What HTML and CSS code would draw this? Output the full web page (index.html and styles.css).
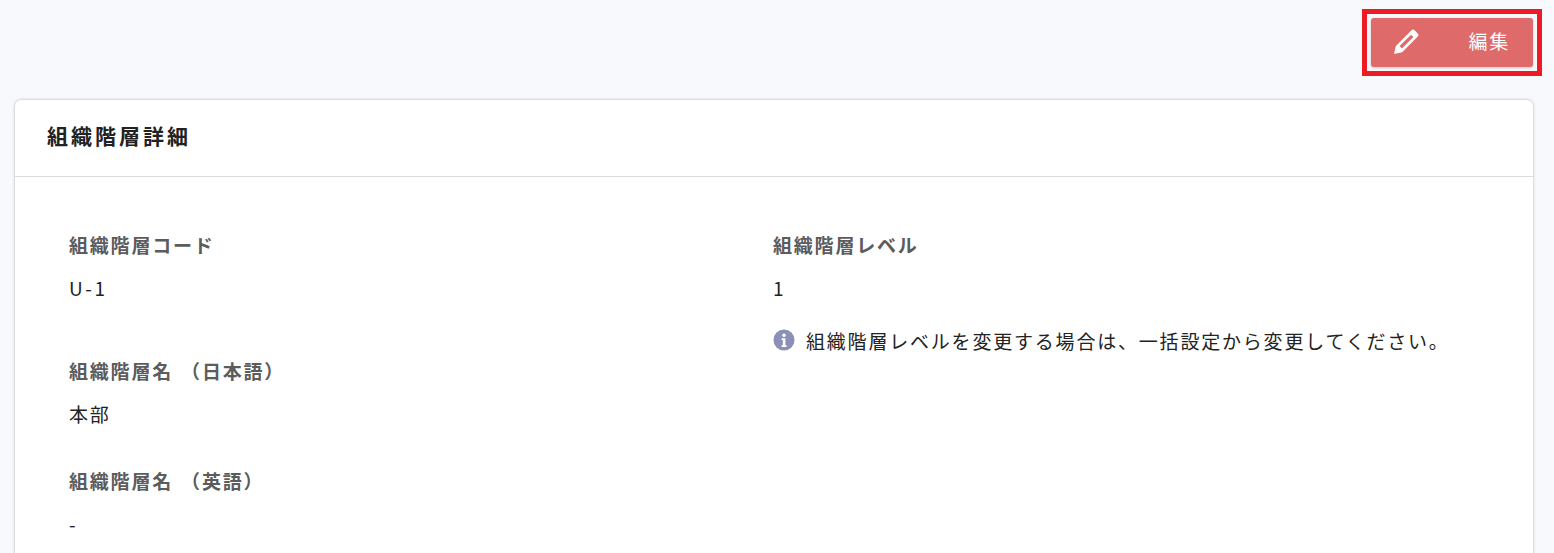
FILE: index.html
```html
<!DOCTYPE html>
<html lang="ja">
<head>
    <meta charset="UTF-8">
    <title>組織階層詳細</title>
    <link rel="stylesheet" href="styles.css">
</head>
<body>
    <div class="toolbar">
        <div class="highlight">
            <button class="edit-btn" type="button">
                <svg class="edit-icon" viewBox="0 0 24 24" aria-hidden="true">
                    <path d="M0 24L1.8 16.2 16.6 1.4a2.4 2.4 0 0 1 3.4 0l2.6 2.6a2.4 2.4 0 0 1 0 3.4L7.8 22.2z M5.4 16.4l2.2 2.2L18.6 7.6 16.4 5.4z" fill-rule="evenodd"/>
                </svg>
                <span>編集</span>
            </button>
        </div>
    </div>

    <div class="card">
        <h2 class="card-title">組織階層詳細</h2>
        <div class="card-body">
            <div class="col">
                <div class="field field-wide">
                    <div class="field-label">組織階層コード</div>
                    <div class="field-value field-code">U-1</div>
                </div>
                <div class="field">
                    <div class="field-label">組織階層名 （日本語）</div>
                    <div class="field-value">本部</div>
                </div>
                <div class="field">
                    <div class="field-label">組織階層名 （英語）</div>
                    <div class="field-value">-</div>
                </div>
            </div>
            <div class="col">
                <div class="field">
                    <div class="field-label">組織階層レベル</div>
                    <div class="field-value">1</div>
                </div>
                <div class="note">
                    <svg class="note-icon" viewBox="0 0 22 22" aria-hidden="true">
                        <circle cx="11" cy="11" r="10.5" fill="#8c8fb8"/>
                        <circle cx="11" cy="6.2" r="1.8" fill="#fff"/>
                        <path d="M8.6 9.2h3.8v7h1.2v1.8H8.6v-1.8h1.2v-5.2H8.6z" fill="#fff"/>
                    </svg>
                    <span>組織階層レベルを変更する場合は、一括設定から変更してください。</span>
                </div>
            </div>
        </div>
    </div>
</body>
</html>
```

FILE: styles.css
```css
html, body {
    height: 100%;
    overflow: hidden;
}
body {
    font-family: "Noto Sans CJK JP", "Noto Sans", sans-serif;
    background-color: #f8f9fd;
    color: #222;
    margin: 0;
    padding: 9px 12px 0 15px;
    box-sizing: border-box;
}
.toolbar {
    display: flex;
    justify-content: flex-end;
    margin-bottom: 24px;
}
.highlight {
    border: 5px solid #ed1c24;
    padding: 4px;
}
.edit-btn {
    display: flex;
    align-items: center;
    justify-content: space-between;
    width: 162px;
    height: 49px;
    padding: 0 23px 0 23px;
    background-color: #de6a6a;
    color: #fff;
    border: none;
    border-radius: 3px;
    font-family: inherit;
    font-size: 19px;
    letter-spacing: 1.8px;
    box-shadow: 0 1px 3px rgba(0, 0, 0, 0.2);
}
.edit-btn span {
    margin-bottom: 5px;
}
.edit-icon {
    width: 25px;
    height: 25px;
    margin-bottom: 2px;
    fill: #fff;
}
.card {
    background-color: #fff;
    border-radius: 6px;
    margin-right: 9px;
    height: 600px;
    box-shadow: 0 0 3px rgba(0, 0, 0, 0.3);
}
.card-title {
    margin: 0;
    padding: 0 32px;
    height: 77px;
    line-height: 71px;
    font-size: 21px;
    font-weight: 700;
    letter-spacing: 3px;
    color: #222;
    border-bottom: 1px solid #ddd;
    box-sizing: border-box;
}
.card-body {
    display: flex;
    padding: 50px 54px 0;
}
.col {
    width: 704px;
}
.field {
    margin-bottom: 31px;
}
.field-wide {
    margin-bottom: 47px;
}
.field-label {
    font-size: 19px;
    line-height: 36px;
    font-weight: 700;
    letter-spacing: 1.8px;
    color: #5c5c5c;
    word-spacing: 2px;
}
.field-value {
    font-size: 19px;
    line-height: 36px;
    margin-top: 7px;
    letter-spacing: 1.8px;
    color: #222;
}
.field-code {
    letter-spacing: 2.6px;
}
.note {
    display: flex;
    align-items: center;
    gap: 11px;
    margin-top: -14px;
    font-size: 19px;
    line-height: 36px;
    letter-spacing: 1.8px;
    color: #222;
    white-space: nowrap;
}
.note-icon {
    width: 22px;
    height: 22px;
    margin-bottom: 2px;
}
```
